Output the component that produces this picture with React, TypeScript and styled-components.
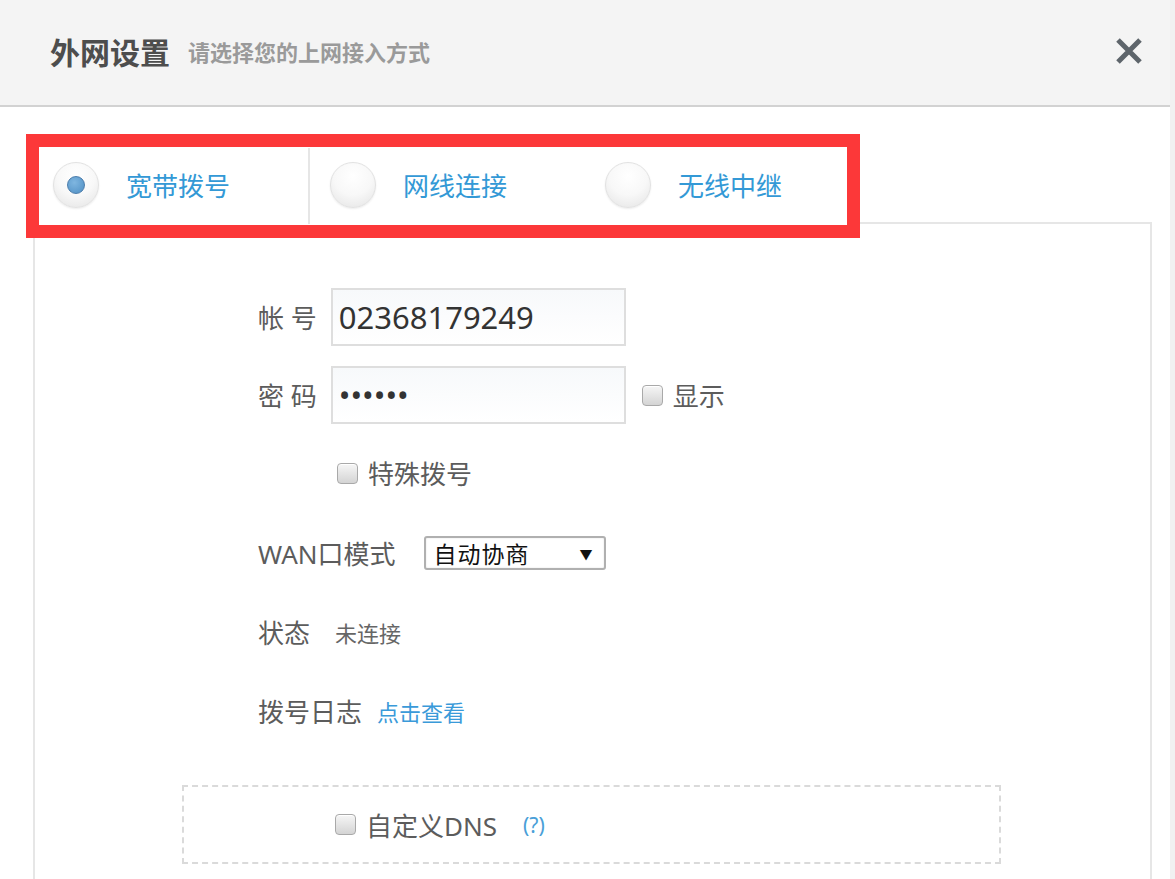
import React from "react";
import styled, { createGlobalStyle } from "styled-components";

const GlobalStyle = createGlobalStyle`
  html, body { margin: 0; padding: 0; background: #f1f1f1; overflow: hidden; }
  body { font-family: "Noto Sans", "Noto Sans CJK SC", sans-serif; }
  *, *::before, *::after { box-sizing: border-box; }
`;

const Page = styled.div`
  display: flex;
  height: 879px;
`;

const Dialog = styled.div`
  width: 1170px;
  height: 879px;
  background: #fff;
  display: flex;
  flex-direction: column;
  overflow: hidden;
`;

const Header = styled.header`
  height: 107px;
  flex: none;
  background: #f4f4f4;
  border-bottom: 2px solid #d2d2d2;
  display: flex;
  align-items: center;
  padding: 0 27px 4px 50px;
`;

const Title = styled.h1`
  margin: 0;
  font-size: 30px;
  font-weight: 700;
  color: #4d4d4d;
`;

const Subtitle = styled.span`
  margin-left: 18px;
  font-size: 22px;
  font-weight: 700;
  color: #9a9a9a;
`;

const CloseButton = styled.button`
  margin-left: auto;
  border: none;
  background: transparent;
  padding: 0;
  width: 28px;
  height: 26px;
  display: flex;
  cursor: pointer;
`;

const Body = styled.div`
  flex: 1;
  display: flex;
  flex-direction: column;
  padding: 41px 18px 0 33px;
`;

const TabStrip = styled.div`
  position: relative;
  z-index: 1;
  display: flex;
  width: 827px;
  height: 76px;
  margin-bottom: -2px;
  background: #fff;
  flex: none;
  &::after {
    content: "";
    position: absolute;
    top: -14px;
    left: -7px;
    width: 834px;
    height: 104px;
    border: 13px solid #fc3839;
    pointer-events: none;
  }
`;

const Tab = styled.div<{ $active?: boolean }>`
  flex: 1;
  display: flex;
  align-items: center;
  gap: 27px;
  padding: 0 0 2px 20px;
  border-right: ${(p) => (p.$active ? "2px solid #e6e6e6" : "none")};
  font-size: 26px;
  color: #3399d6;
  cursor: pointer;
`;

const RadioCircle = styled.span<{ $checked?: boolean }>`
  width: 46px;
  height: 46px;
  border-radius: 50%;
  flex: none;
  background: radial-gradient(circle at 50% 30%, #ffffff 0%, #f8f8f8 50%, #e3e3e3 100%);
  border: 1px solid #e2e2e2;
  box-shadow: 0 1px 2px rgba(0, 0, 0, 0.08);
  display: flex;
  align-items: center;
  justify-content: center;
  &::after {
    content: "";
    display: ${(p) => (p.$checked ? "block" : "none")};
    width: 18px;
    height: 18px;
    border-radius: 50%;
    background: radial-gradient(circle at 40% 35%, #7fb6e0, #4f8fc4);
    border: 1px solid #4a7cab;
  }
`;

const Panel = styled.div`
  flex: 1;
  border: 2px solid #e6e6e6;
  border-bottom: none;
  display: flex;
  flex-direction: column;
  padding-left: 147px;
`;

const Row = styled.div<{ $mt: number; $h?: number; $indent?: number }>`
  display: flex;
  align-items: center;
  margin-top: ${(p) => p.$mt}px;
  height: ${(p) => p.$h ?? 40}px;
  padding-left: ${(p) => 76 + (p.$indent ?? 0)}px;
`;

const Label = styled.span`
  font-size: 26px;
  color: #5c5c5c;
  white-space: pre;
`;

const Field = styled.input`
  margin-left: 14px;
  width: 295px;
  height: 58px;
  border: 2px solid #dedede;
  background: linear-gradient(#f7f9fb, #ffffff);
  padding: 0 0 0 6px;
  font-family: "Noto Sans", sans-serif;
  font-size: 31px;
  color: #333;
  outline: none;
`;

const Check = styled.input.attrs({ type: "checkbox" })`
  appearance: none;
  -webkit-appearance: none;
  margin: 0;
  width: 21px;
  height: 21px;
  flex: none;
  border-radius: 4px;
  border: 1px solid #a9a9a9;
  background: linear-gradient(#f6f6f6, #d4d4d4);
  box-shadow: inset 0 1px 0 #fff;
`;

const CheckLabel = styled.label<{ $ml?: number }>`
  display: flex;
  align-items: center;
  gap: 10px;
  margin-left: ${(p) => p.$ml ?? 0}px;
  font-size: 26px;
  color: #5c5c5c;
`;

const SelectBox = styled.div`
  margin-left: 28px;
  width: 182px;
  height: 34px;
  border: 2px solid #b0b0b0;
  border-radius: 3px;
  box-shadow: inset 0 0 2px rgba(0, 0, 0, 0.12);
  display: flex;
  align-items: center;
  padding: 0 10px 0 8px;
  font-size: 23px;
  letter-spacing: 1px;
  color: #111;
`;

const Arrow = styled.span`
  margin-left: auto;
  font-size: 13px;
  color: #111;
`;

const Value = styled.span<{ $ml: number; $link?: boolean }>`
  margin-left: ${(p) => p.$ml}px;
  font-size: 22px;
  color: ${(p) => (p.$link ? "#3a9ad9" : "#666")};
  cursor: ${(p) => (p.$link ? "pointer" : "default")};
`;

const DashedBox = styled.div`
  margin-top: 54px;
  width: 819px;
  height: 79px;
  border: 2px dashed #dadada;
  display: flex;
  align-items: center;
  padding-left: 151px;
`;

const Help = styled.span`
  margin-left: 26px;
  font-size: 21px;
  color: #4a9fd8;
`;

export default function App() {
  return (
    <>
      <GlobalStyle />
      <Page>
        <Dialog>
          <Header>
            <Title>外网设置</Title>
            <Subtitle>请选择您的上网接入方式</Subtitle>
            <CloseButton aria-label="关闭">
              <svg width="28" height="26" viewBox="0 0 28 26">
                <path d="M3 2 L25 24 M25 2 L3 24" stroke="#5e656b" strokeWidth="5" strokeLinecap="butt" />
              </svg>
            </CloseButton>
          </Header>
          <Body>
            <TabStrip>
              <Tab $active>
                <RadioCircle $checked />
                宽带拨号
              </Tab>
              <Tab>
                <RadioCircle />
                网线连接
              </Tab>
              <Tab>
                <RadioCircle />
                无线中继
              </Tab>
            </TabStrip>
            <Panel>
              <Row $mt={64} $h={58}>
                <Label>帐 号</Label>
                <Field value="02368179249" readOnly />
              </Row>
              <Row $mt={20} $h={58}>
                <Label>密 码</Label>
                <Field type="password" value="123456" readOnly />
                <CheckLabel $ml={16}>
                  <Check />
                  显示
                </CheckLabel>
              </Row>
              <Row $mt={29} $indent={79}>
                <CheckLabel>
                  <Check />
                  特殊拨号
                </CheckLabel>
              </Row>
              <Row $mt={40}>
                <Label>WAN口模式</Label>
                <SelectBox>
                  自动协商
                  <Arrow>▼</Arrow>
                </SelectBox>
              </Row>
              <Row $mt={39}>
                <Label>状态</Label>
                <Value $ml={25}>未连接</Value>
              </Row>
              <Row $mt={39}>
                <Label>拨号日志</Label>
                <Value $ml={15} $link>
                  点击查看
                </Value>
              </Row>
              <DashedBox>
                <CheckLabel>
                  <Check />
                  自定义DNS
                </CheckLabel>
                <Help>(?)</Help>
              </DashedBox>
            </Panel>
          </Body>
        </Dialog>
      </Page>
    </>
  );
}
